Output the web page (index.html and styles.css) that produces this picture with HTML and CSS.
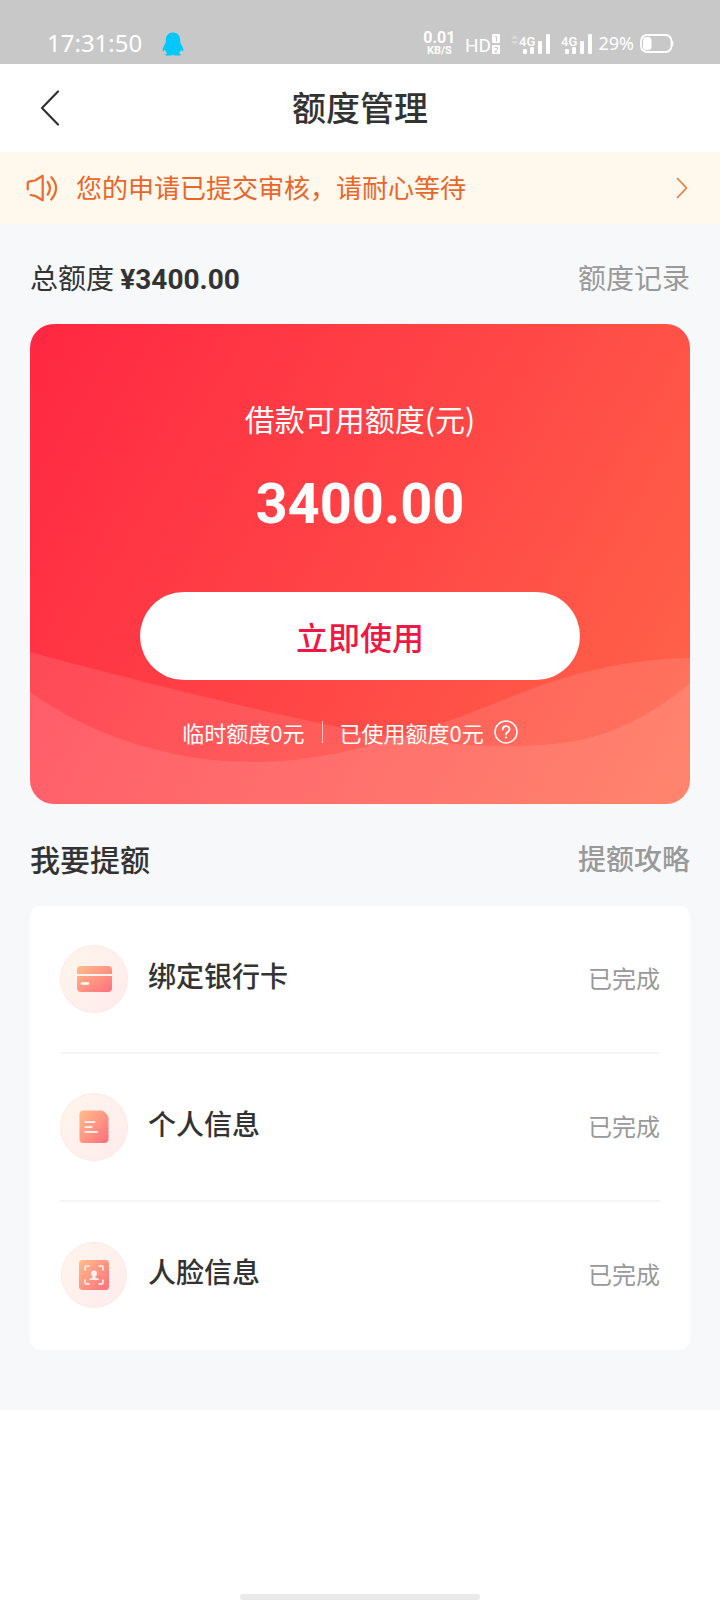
FILE: index.html
```html
<!DOCTYPE html>
<html lang="zh-CN">
<head>
<meta charset="utf-8">
<meta name="viewport" content="width=device-width, initial-scale=1">
<title>额度管理</title>
<link rel="stylesheet" href="styles.css">
</head>
<body>
<div class="statusbar">
  <div class="statusbar-left">
    <span class="clock">17:31:50</span>
    <svg class="qq" width="22" height="24" viewBox="0 0 22 24" aria-hidden="true">
      <path fill="#00c8fa" d="M11 .5C6.400.5 3.800 3.700 3.800 8v2.500C2 13.500.6 16 .7 18.300c0 1.200.8 1.300 1.700.1l.6-.8c.3 1.400 1 2.600 2 3.600-1.300.5-1.900 1-1.700 1.700.2.900 5.300.9 7.700.1 2.400.8 7.500.8 7.700-.1.200-.7-.4-1.200-1.700-1.700 1-1 1.700-2.200 2-3.600l.6.8c.9 1.200 1.700 1.100 1.700-.1.100-2.300-1.300-4.800-3.100-7.800V8c0-4.300-2.600-7.500-7.200-7.500z"/>
    </svg>
  </div>
  <div class="statusbar-right">
    <div class="speed"><span class="speed-value">0.01</span><span class="speed-unit">KB/S</span></div>
    <svg width="34" height="24" viewBox="0 0 34 24" fill="#fff" aria-hidden="true">
      <text class="hd-text" x="-1" y="20">HD</text>
      <rect x="26" y="2" width="8" height="9" rx="1"/>
      <rect x="26" y="13" width="8" height="9" rx="1"/>
      <path d="M29 4.500h1.500v5M28.500 15.500h3v2l-3 2v.5h3" fill="none" stroke="#c8c8c8" stroke-width="1"/>
    </svg>
    <svg width="39" height="24" viewBox="0 0 39 24" fill="#fff" aria-hidden="true">
      <path d="M0 7l3.500-4L7 7zM0 9l3.500 4L7 9z" opacity=".3"/>
      <text class="net-text" x="8" y="14">4G</text>
      <rect x="12" y="17" width="4" height="5" rx="1"/>
      <rect x="19" y="15" width="4" height="7" rx="1"/>
      <rect x="27" y="9" width="4" height="13" rx="1"/>
      <rect x="35" y="2" width="4" height="20" rx="1"/>
    </svg>
    <svg width="31" height="24" viewBox="0 0 31 24" fill="#fff" aria-hidden="true">
      <text class="net-text" x="0" y="14">4G</text>
      <rect x="4" y="17" width="4" height="5" rx="1"/>
      <rect x="11" y="15" width="4" height="7" rx="1"/>
      <rect x="19" y="9" width="4" height="13" rx="1"/>
      <rect x="27" y="2" width="4" height="20" rx="1"/>
    </svg>
    <div class="power">
      <span class="percent">29%</span>
      <svg width="34" height="24" viewBox="0 0 34 24" aria-hidden="true">
        <rect x="1" y="3" width="30.500" height="17" rx="6" fill="none" stroke="#fff" stroke-width="1.800"/>
        <path d="M32 8.500c2 1 2 5 0 6z" fill="#fff"/>
        <rect x="3" y="5" width="8.500" height="13" rx="3.500" fill="#fff"/>
      </svg>
    </div>
  </div>
</div>

<header class="navbar">
  <button class="back" type="button" aria-label="返回">
    <svg width="20" height="36" viewBox="0 0 20 36" fill="none" stroke="#333" stroke-width="2.200" stroke-linecap="round" stroke-linejoin="round"><path d="M18 1.500 2 18l16 16.500"/></svg>
  </button>
  <h1 class="title">额度管理</h1>
</header>

<a class="notice" href="#">
  <svg width="32" height="28" viewBox="0 0 32 28" fill="none" stroke="#ec6a2c" stroke-width="2.200" stroke-linecap="round" stroke-linejoin="round" aria-hidden="true">
    <path d="M1.700 15.500V9.500q0-2 2-2.200L9 6.500l7.700-4.700v24.500L9 21.800l-4.300-.8M21.700 8q4.500 6 0 12.700M25.300 3.200q9.500 10.500 0 22.300"/>
  </svg>
  <span class="notice-text">您的申请已提交审核，请耐心等待</span>
  <svg width="12" height="22" viewBox="0 0 12 22" fill="none" stroke="#e8773c" stroke-width="1.600" stroke-linecap="round" stroke-linejoin="round" aria-hidden="true"><path d="M1.500 1.500 10.500 11l-9 9.500"/></svg>
</a>

<main class="content">
  <div class="summary">
    <p class="total">总额度 <strong class="total-value">¥3400.00</strong></p>
    <a class="side-link" href="#">额度记录</a>
  </div>

  <section class="limit-card">
    <svg class="waves" viewBox="0 0 660 480" preserveAspectRatio="none" fill="#fff" fill-opacity=".11" aria-hidden="true">
      <path d="M0 328C110 358 270 397 340 409 420 423 490 427 550 416 590 408 630 385 660 359V480H0z"/>
      <path d="M0 368C50 404 130 438 223 438 300 438 360 416 430 393 500 366 560 336 660 334V480H0z"/>
    </svg>
    <h2 class="limit-label">借款可用额度(元)</h2>
    <p class="limit-amount">3400.00</p>
    <button class="use-button" type="button">立即使用</button>
    <div class="limit-detail">
      <span>临时额度0元</span>
      <span class="separator"></span>
      <span>已使用额度0元</span>
      <button class="help" type="button" aria-label="说明">
        <svg width="24" height="24" viewBox="0 0 24 24" fill="none" stroke="#fff" stroke-width="1.500" stroke-linecap="round">
          <circle cx="12" cy="12" r="11"/>
          <path stroke-width="1.800" d="M8.700 9.500C8.700 4.900 15.500 5.100 15.500 9.300c0 2.600-3.500 2.700-3.500 5.200"/>
          <circle cx="12" cy="17.500" r="1.100" fill="#fff" stroke="none"/>
        </svg>
      </button>
    </div>
  </section>

  <div class="section-head">
    <h2 class="section-title">我要提额</h2>
    <a class="side-link side-link-medium" href="#">提额攻略</a>
  </div>

  <ul class="tasks">
    <li class="task">
      <svg class="task-icon" viewBox="0 0 68 68" aria-hidden="true">
        <defs>
          <linearGradient id="halo" x1="0" y1="0" x2="1" y2="1"><stop offset="0" stop-color="#fff5ec"/><stop offset="1" stop-color="#ffebed"/></linearGradient>
          <linearGradient id="warm" x1="0" y1="0" x2="1" y2="1"><stop offset="0" stop-color="#ffbd8b"/><stop offset="1" stop-color="#ff6f7c"/></linearGradient>
        </defs>
        <circle cx="34" cy="34" r="33.500" fill="url(#halo)" stroke="#fbeae6"/>
        <rect x="17" y="21" width="35" height="26" rx="4" fill="url(#warm)"/>
        <path d="M17 30h35" stroke="#fff1ec" stroke-width="2.200"/>
        <path d="M22 38.500h6" stroke="#fff" stroke-width="2.400" stroke-linecap="round"/>
      </svg>
      <span class="task-name">绑定银行卡</span>
      <span class="task-state">已完成</span>
    </li>
    <li class="task">
      <svg class="task-icon" viewBox="0 0 68 68" aria-hidden="true">
        <circle cx="34" cy="34" r="33.500" fill="url(#halo)" stroke="#fbeae6"/>
        <path d="M23.500 17.500H41q2 0 3.500 1.500l2.500 2.500q1.500 1.500 1.500 3.500v21q0 4-4 4h-21q-4 0-4-4v-24.500q0-4 4-4z" fill="url(#warm)"/>
        <path d="M25.500 29h9M25.500 34h6M25.500 39h11.500" stroke="#ffebe6" stroke-width="2.200" stroke-linecap="round"/>
      </svg>
      <span class="task-name">个人信息</span>
      <span class="task-state">已完成</span>
    </li>
    <li class="task">
      <svg class="task-icon" viewBox="0 0 68 68" aria-hidden="true">
        <circle cx="34" cy="34" r="32.500" fill="url(#halo)" stroke="#fbeae6"/>
        <rect x="19" y="19" width="30" height="30" rx="3.500" fill="url(#warm)"/>
        <path d="M25 29.500V27q0-2 2-2h2.500M38.500 25H41q2 0 2 2v2.500M43 38.500V41q0 2-2 2h-2.500M29.500 43H27q-2 0-2-2v-2.500" fill="none" stroke="#ffe3dc" stroke-width="2"/>
        <path d="M34 29.500c-2 0-3 1.300-3 3 0 1.400.8 2 1.500 3v1.200c-1.800.5-3.500 1-3.500 2.300h10c0-1.300-1.700-1.800-3.500-2.300v-1.200c.7-1 1.500-1.600 1.500-3 0-1.700-1-3-3-3z" fill="#ffeeea"/>
      </svg>
      <span class="task-name">人脸信息</span>
      <span class="task-state">已完成</span>
    </li>
  </ul>
</main>

<div class="home-indicator"></div>
</body>
</html>
```
FILE: styles.css
```css
* {
  box-sizing: border-box;
}

body {
  margin: 0;
  min-height: 100vh;
  display: flex;
  flex-direction: column;
  background: #fff;
  color: #333;
  font-family: "Noto Sans CJK SC", "Noto Sans", sans-serif;
  font-size: 28px;
  line-height: 40px;
}

h1, h2, p, ul {
  margin: 0;
  padding: 0;
}

ul {
  list-style: none;
}

a {
  color: inherit;
  text-decoration: none;
}

button {
  border: 0;
  padding: 0;
  font: inherit;
  cursor: pointer;
}

svg {
  display: block;
  flex: none;
}

.statusbar {
  display: flex;
  justify-content: space-between;
  align-items: center;
  height: 64px;
  padding: 24px 46px 0 47px;
  background: #c8c8c8;
  color: #fff;
  font-family: "Noto Sans", sans-serif;
}

.statusbar-left {
  display: flex;
  align-items: center;
  gap: 20px;
}

.clock {
  padding-bottom: 2px;
  font-size: 24px;
}

.statusbar-right {
  display: flex;
  align-items: center;
  gap: 11px;
}

.speed {
  display: flex;
  flex-direction: column;
  align-items: center;
  font-family: Roboto, sans-serif;
  font-weight: 700;
}

.speed-value {
  font-size: 16px;
  line-height: 14px;
}

.speed-unit {
  font-size: 11px;
  line-height: 12px;
}

.hd-text {
  font: 400 19px Roboto, sans-serif;
}

.net-text {
  font: 500 13px Roboto, sans-serif;
}

.power {
  display: flex;
  align-items: center;
  gap: 6px;
  margin-left: -5px;
}

.percent {
  padding-bottom: 2px;
  font-size: 18px;
}

.navbar {
  display: grid;
  grid-template-columns: 60px 1fr 60px;
  align-items: center;
  height: 88px;
  background: #fff;
}

.back {
  display: flex;
  justify-content: flex-end;
  background: none;
}

.title {
  padding-bottom: 2px;
  font-size: 34px;
  font-weight: 500;
  line-height: 48px;
  text-align: center;
}

.notice {
  display: flex;
  align-items: center;
  gap: 18px;
  height: 72px;
  padding: 0 32px 0 26px;
  background: #fff8ec;
  color: #e8662a;
  font-size: 26px;
}

.notice-text {
  flex: 1;
  padding-bottom: 2px;
}

.content {
  padding: 0 30px 60px;
  background: #f7f8fa;
}

.summary,
.section-head {
  display: flex;
  justify-content: space-between;
  align-items: center;
}

.summary {
  padding: 33px 0 27px;
}

.section-head {
  padding: 34px 0 28px;
}

.total-value {
  font-family: Roboto, sans-serif;
  font-weight: 700;
  line-height: 28px;
}

.side-link {
  color: #999;
}

.side-link-medium {
  font-weight: 500;
}

.section-title {
  font-size: 30px;
  font-weight: 500;
}

.limit-card {
  position: relative;
  display: flex;
  flex-direction: column;
  align-items: center;
  padding: 74px 20px 56px;
  border-radius: 24px;
  overflow: hidden;
  background: linear-gradient(120deg, #ff2742, #ff4546 50%, #ff6649);
  color: #fff;
}

.waves {
  position: absolute;
  inset: 0;
  width: 100%;
  height: 100%;
}

.limit-label,
.limit-amount,
.use-button,
.limit-detail {
  position: relative;
}

.limit-label {
  font-size: 30px;
  font-weight: 400;
}

.limit-amount {
  margin-top: 34px;
  font: 700 56px/64px Roboto, sans-serif;
}

.use-button {
  width: 100%;
  max-width: 440px;
  margin-top: 56px;
  padding: 20px;
  border-radius: 44px;
  background: #fff;
  color: #ee1745;
  font-size: 32px;
  font-weight: 500;
  line-height: 48px;
}

.limit-detail {
  display: flex;
  align-items: center;
  margin-top: 36px;
  padding-right: 20px;
  font-size: 22px;
  line-height: 32px;
}

.separator {
  width: 1px;
  height: 22px;
  margin: 0 17px;
  background: #ffc4c2;
}

.help {
  margin-left: 10px;
  background: none;
}

.tasks {
  padding: 0 30px 2px;
  border-radius: 10px;
  background: #fff;
}

.task {
  display: flex;
  align-items: center;
  padding: 39px 0;
  border-bottom: 2px solid #f5f6f7;
}

.task:last-child {
  border-bottom: 0;
}

.task-icon {
  width: 68px;
  height: 68px;
}

.task-name {
  flex: 1;
  padding: 0 20px 8px;
  font-weight: 500;
}

.task-state {
  padding-bottom: 2px;
  color: #999;
  font-size: 24px;
}

.home-indicator {
  width: 240px;
  height: 6px;
  margin: auto auto 0;
  border-radius: 3px;
  background: #eaeaea;
}
```
